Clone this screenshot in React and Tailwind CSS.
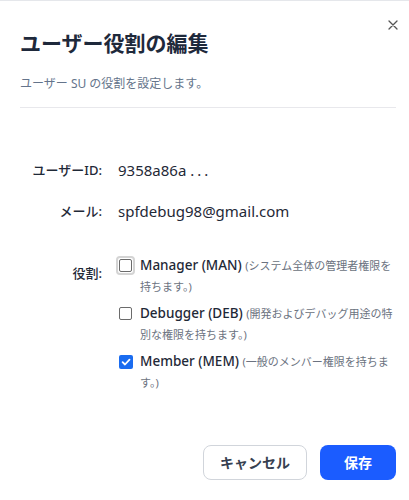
import React from "react";

const font = { fontFamily: '"Noto Sans", "Noto Sans CJK JP", sans-serif' };

function Box({ checked, focused }) {
  return (
    <span className={"flex items-center justify-center shrink-0 w-[19px] h-[19px] rounded-[4px] " + (focused ? "border-2 border-[#d4d4d4]" : "")}>
      {checked ? (
        <span className="flex items-center justify-center w-[14px] h-[14px] rounded-[2px] bg-[#1a6cf0]">
          <svg width="10" height="10" viewBox="0 0 10 10">
            <path d="M1.6 5.2 L4 7.5 L8.5 2.6" stroke="white" strokeWidth="1.8" fill="none" strokeLinecap="round" strokeLinejoin="round" />
          </svg>
        </span>
      ) : (
        <span className="w-[13px] h-[13px] rounded-[2px] border border-[#6b6b6b] bg-white" />
      )}
    </span>
  );
}

function Role({ name, desc, checked, focused, top }) {
  return (
    <div className={"flex items-start gap-[4px] " + (top || "")}>
      <div className="pt-[1px] -ml-[2px]">
        <Box checked={checked} focused={focused} />
      </div>
      <p className="text-[13px] leading-[20px] text-[#1f2937] pl-[1px] w-[256px]">
        <span className="font-medium text-[13.5px] leading-[20px]">{name}</span>{" "}
        <span className="text-[11px] leading-[20px] text-[#6b7280]">{desc}</span>
      </p>
    </div>
  );
}

export default function App() {
  return (
    <div style={font} className="relative w-[409px] h-[500px] bg-white border-t border-[#e5e7eb] overflow-hidden">
      <button className="absolute right-[10px] top-[18px] text-[#4b5563]">
        <svg width="12" height="12" viewBox="0 0 12 12">
          <path d="M2 2 L10 10 M10 2 L2 10" stroke="#555" strokeWidth="1.3" strokeLinecap="round" />
        </svg>
      </button>
      <div className="pl-5 pr-[13px]">
        <h2 className="pt-[26px] text-[21px] leading-[32px] font-bold text-[#1e293b]">ユーザー役割の編集</h2>
        <p className="mt-[15px] text-[12px] leading-[20px] text-[#64748b]">ユーザー SU の役割を設定します。</p>
        <div className="mt-[13px] border-b border-[#e8e8ec]" />

        <div className="mt-[52px] grid grid-cols-[82px_1fr] gap-x-4 items-start">
          <div className="text-right text-[13px] leading-[20px] font-medium text-[#1f2937]">ユーザーID:</div>
          <div className="text-[15px] leading-[20px] text-[#1f2937]">9358a86a <span className="tracking-[3px]">...</span></div>

          <div className="mt-[21px] text-right text-[13px] leading-[20px] font-medium text-[#1f2937]">メール:</div>
          <div className="mt-[21px] text-[15px] leading-[20px] text-[#1f2937]">spfdebug98@gmail.com</div>

          <div className="mt-[42px] text-right text-[13px] leading-[20px] font-medium text-[#1f2937]">役割:</div>
          <div className="mt-[34px] flex flex-col">
            <Role name="Manager (MAN)" desc="(システム全体の管理者権限を持ちます。)" focused />
            <Role top="mt-[6px]" name="Debugger (DEB)" desc="(開発およびデバッグ用途の特別な権限を持ちます。)" />
            <Role top="mt-[6px]" name="Member (MEM)" desc="(一般のメンバー権限を持ちます。)" checked />
          </div>
        </div>

        <div className="mt-[52px] flex justify-end gap-[13px]">
          <button className="w-[104px] h-[35px] rounded-lg border border-[#d1d5db] bg-white text-[14px] font-bold text-[#374151]">キャンセル</button>
          <button className="w-[76px] h-[35px] rounded-lg bg-[#1b5cff] text-[14px] font-bold text-white">保存</button>
        </div>
      </div>
    </div>
  );
}
